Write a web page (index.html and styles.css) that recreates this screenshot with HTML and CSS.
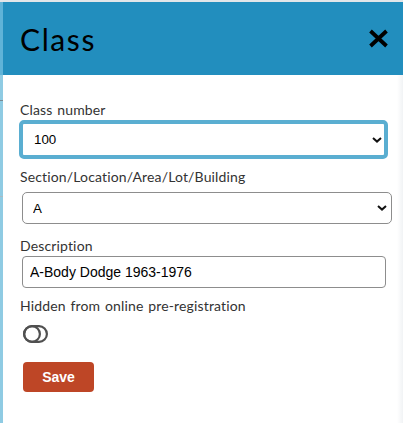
FILE: index.html
```html
<!DOCTYPE html>
<html>
<head>
<meta charset="utf-8">
<link rel="stylesheet" href="styles.css">
</head>
<body>
<div class="screen">
  <div class="topline"></div>
  <div class="main">
    <div class="backdrop">
      <div class="backdrop-top"></div>
      <div class="backdrop-bottom">
        <div class="tick tick-1"></div>
        <div class="tick tick-2"></div>
      </div>
    </div>
    <div class="modal">
      <div class="modal-header">
        <h1 class="title">Class</h1>
        <button class="close" type="button" aria-label="Close">
          <svg width="21" height="19" viewBox="0 0 21 19"><path d="M2.5 2 L18.5 17 M18.5 2 L2.5 17" stroke="#000" stroke-width="3.8" fill="none"/></svg>
        </button>
      </div>
      <form class="modal-body">
        <label class="label">Class number</label>
        <div class="select-wrap select-focused">
          <select class="select"><option>100</option></select>
          <svg class="chev" width="10" height="6" viewBox="0 0 10 6"><path d="M1 1 L5 4.6 L9 1" stroke="#111" stroke-width="2" fill="none"/></svg>
        </div>

        <label class="label label-2">Section/Location/Area/Lot/Building</label>
        <div class="select-wrap select-plain">
          <select class="select"><option>A</option></select>
          <svg class="chev" width="10" height="6" viewBox="0 0 10 6"><path d="M1 1 L5 4.6 L9 1" stroke="#111" stroke-width="2" fill="none"/></svg>
        </div>

        <label class="label label-3">Description</label>
        <input class="text-input" type="text" value="A-Body Dodge 1963-1976">

        <label class="label label-4">Hidden from online pre-registration</label>
        <div class="toggle">
          <svg width="25" height="18" viewBox="0 0 25 18"><rect x="1.1" y="1.1" width="22.8" height="15.8" rx="7.9" stroke="#505050" stroke-width="2.2" fill="none"/><circle cx="9" cy="9" r="7.9" stroke="#505050" stroke-width="2.2" fill="none"/></svg>
        </div>

        <button class="save" type="button">Save</button>
      </form>
    </div>
  </div>
</div>
</body>
</html>
```

FILE: styles.css
```css
html, body {
  margin: 0;
  padding: 0;
  background: #fff;
}

.screen {
  width: 403px;
  height: 423px;
  overflow: hidden;
  display: flex;
  flex-direction: column;
}

.topline {
  height: 2px;
  background: #e2e6e9;
}

.main {
  flex: 1;
  display: flex;
}

.backdrop {
  width: 3px;
  display: flex;
  flex-direction: column;
}

.backdrop-top {
  height: 73px;
  background: #5fb3d8;
}

.backdrop-bottom {
  flex: 1;
  background: #8fcbe3;
}

.tick {
  height: 1px;
  background: #7a8a92;
}

.tick-1 {
  margin-top: 25px;
}

.tick-2 {
  margin-top: 95px;
  background: #a9bcc5;
}

.modal {
  flex: 1;
  display: flex;
  flex-direction: column;
}

.modal-header {
  height: 73px;
  background: #228ebe;
  display: flex;
  align-items: center;
  justify-content: space-between;
  padding: 0 14px 0 17px;
}

.title {
  margin: 1px 0 0 0;
  font-family: Lato, "Open Sans", sans-serif;
  font-weight: 400;
  font-size: 30px;
  letter-spacing: 1.6px;
  color: #000;
}

.close {
  border: 0;
  background: none;
  padding: 0;
  display: flex;
}

.modal-body {
  flex: 1;
  display: flex;
  flex-direction: column;
  align-items: flex-start;
  padding: 25px 0 0 17px;
  background: linear-gradient(to right, #fff calc(100% - 6px), #f1f3f5);
}

.label {
  display: block;
  font-family: Lato, "Open Sans", sans-serif;
  font-size: 14px;
  letter-spacing: 0.15px;
  word-spacing: 1px;
  line-height: 20px;
  color: #333;
}

.label-2 {
  margin-top: 8px;
}

.label-3 {
  margin-top: 12px;
}

.label-4 {
  margin-top: 8px;
}

.select-wrap {
  position: relative;
}

.select {
  appearance: none;
  -webkit-appearance: none;
  width: 100%;
  height: 100%;
  box-sizing: border-box;
  background: #fff;
  font-family: "Liberation Sans", Arial, sans-serif;
  font-size: 13.33px;
  color: #000;
  margin: 0;
  outline: none;
}

.select-focused {
  margin-left: -1px;
  width: 369px;
  height: 39px;
}

.select-focused .select {
  border: 4px solid #5aaed1;
  border-radius: 5px;
  padding: 0 0 0 11px;
}

.select-plain {
  margin-top: 5px;
  margin-left: 2px;
  width: 370px;
  height: 32px;
}

.select-plain .select {
  border: 1px solid #8d8d8d;
  border-radius: 5px;
  padding: 0 0 0 10px;
}

.chev {
  position: absolute;
  top: 50%;
  margin-top: -3px;
}

.select-focused .chev {
  right: 6px;
}

.select-plain .chev {
  right: 5px;
}

.text-input {
  margin: 0 0 0 2px;
  width: 364px;
  height: 32px;
  box-sizing: border-box;
  border: 1px solid #8d8d8d;
  border-radius: 4px;
  padding: 0 0 0 7px;
  font-family: "Liberation Sans", Arial, sans-serif;
  font-size: 14px;
  color: #000;
  background: #fff;
  outline: none;
}

.toggle {
  margin: 9px 0 0 3px;
  display: flex;
}

.save {
  margin: 19px 0 0 3px;
  width: 71px;
  height: 30px;
  border: 0;
  border-radius: 4px;
  background: #be4626;
  color: #fff;
  font-family: "Liberation Sans", Arial, sans-serif;
  font-weight: 700;
  font-size: 14px;
  padding: 0;
}
```
